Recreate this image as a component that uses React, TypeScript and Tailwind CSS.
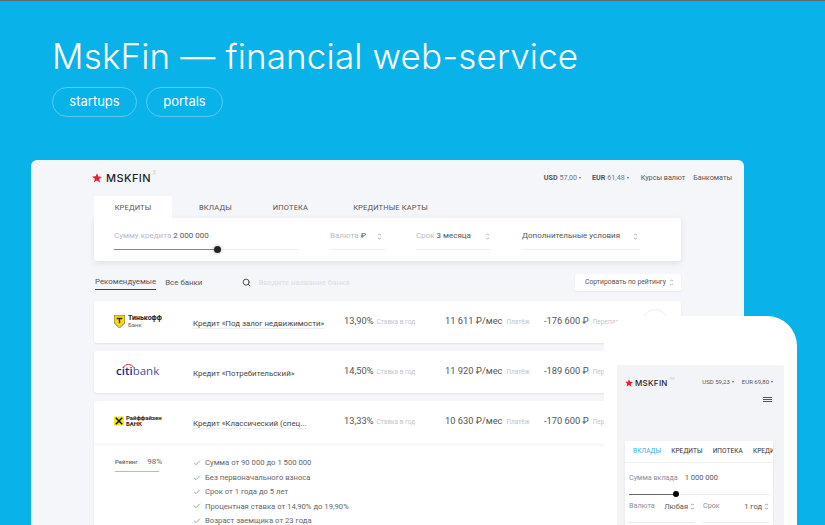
import { Check, ChevronDown, ChevronUp, Search } from "lucide-react";

const ROBOTO = "font-['Roboto',sans-serif]";

function Updown({ className = "text-[#777]" }: { className?: string }) {
  return (
    <span className={`inline-flex flex-col items-center gap-[1px] ${className}`}>
      <ChevronUp className="h-[3px] w-[5px]" strokeWidth={3} preserveAspectRatio="none" />
      <ChevronDown className="h-[3px] w-[5px]" strokeWidth={3} preserveAspectRatio="none" />
    </span>
  );
}

function Caret() {
  return <span className="ml-[2px] inline-block h-0 w-0 border-x-[1.5px] border-t-[2px] border-x-transparent border-t-[#666] align-middle" />;
}

function StarMark({ size }: { size: number }) {
  return (
    <svg width={size} height={size} viewBox="0 0 20 20">
      <path d="M10 0.500l2.700 6.600 7.100 0.500-5.400 4.600 1.700 6.900L10 14.900l-6.100 3.700 1.700-6.900L0.200 7.100l7.100-0.500z" fill="#e8222a" />
    </svg>
  );
}

function Logo({ small = false }: { small?: boolean }) {
  return (
    <div className={`flex items-center ${small ? "gap-[2px]" : "gap-[4px]"}`}>
      <StarMark size={small ? 8 : 10} />
      <span
        className={`font-['Inter',sans-serif] font-medium leading-none text-[#1f1f1f] ${
          small ? "text-[8px] tracking-[0.3px]" : "text-[11px] tracking-[0.4px]"
        }`}
      >
        MSKFIN
      </span>
    </div>
  );
}

function TinkoffLogo() {
  return (
    <div className="flex items-center gap-[3px]">
      <svg width="11" height="13" viewBox="0 0 11 13">
        <path d="M0 0h11v6.500c0 2.500-2.800 3.500-5.500 6.500C2.800 10 0 9 0 6.500z" fill="#f8d81c" stroke="#333" strokeWidth="0.6" />
        <path d="M2.700 2.800h5.600v1.500H6.200v4H4.800v-4H2.700z" fill="#333" />
      </svg>
      <div>
        <div className="text-[7px] font-bold leading-[7px] text-[#222]">Тинькофф</div>
        <div className="text-[6px] leading-[6px] text-[#666]">Банк</div>
      </div>
    </div>
  );
}

function CitiLogo() {
  return (
    <div className="relative ml-[2px] font-['Open_Sans',sans-serif] text-[11.500px] leading-none text-[#1b2a78]">
      <svg className="absolute left-[6px] top-[-2px]" width="13" height="5" viewBox="0 0 13 5">
        <path d="M1 4.500C4 0.500 9 0.500 12 4.500" fill="none" stroke="#e2312d" strokeWidth="1" />
      </svg>
      <span className="font-semibold">citi</span>
      <span className="font-normal text-[#4a4f94]">bank</span>
    </div>
  );
}

function RaiffeisenLogo() {
  return (
    <div className="flex items-center gap-[2px]">
      <svg width="10" height="10" viewBox="0 0 11 10">
        <rect width="11" height="10" fill="#f5e61e" />
        <path d="M2 1.500 9 8.500M9 1.500 2 8.500" stroke="#111" strokeWidth="1.600" />
      </svg>
      <div className="text-[6px] font-bold leading-[6px] text-[#222]">
        <div>Райффайзен</div>
        <div>БАНК</div>
      </div>
    </div>
  );
}

function LoanRow({
  logo,
  name,
  underlined,
  rate,
  payment,
  over,
}: {
  logo: React.ReactNode;
  name: string;
  underlined?: boolean;
  rate: string;
  payment: string;
  over: string;
}) {
  return (
    <div className="flex h-[42px] items-center overflow-hidden whitespace-nowrap pb-[2px]">
      <div className="flex w-[99px] shrink-0 pl-[20px]">{logo}</div>
      <div className="w-[151px] shrink-0">
        <span className={`text-[7.900px] text-[#444] ${underlined ? "border-b border-[#eeeff3]" : ""}`}>{name}</span>
      </div>
      <div className="flex w-[101px] shrink-0 items-baseline gap-[3px]">
        <span className="text-[9.300px] text-[#555]">{rate}</span>
        <span className="text-[6.500px] text-[#c3c5cc]">Ставка в год</span>
      </div>
      <div className="flex w-[99px] shrink-0 items-baseline gap-[4px]">
        <span className="text-[9.300px] text-[#555]">{payment}</span>
        <span className="text-[6.500px] text-[#c3c5cc]">Платёж</span>
      </div>
      <div className="flex shrink-0 items-baseline gap-[4px]">
        <span className="text-[9.300px] text-[#555]">{over}</span>
        <span className="text-[6.500px] text-[#c3c5cc]">Переплата</span>
      </div>
    </div>
  );
}

const conditions = [
  "Сумма от 90 000 до 1 500 000",
  "Без первоначального взноса",
  "Срок от 1 года до 5 лет",
  "Процентная ставка от 14,90% до 19,90%",
  "Возраст заемщика от 23 года",
];

export default function App() {
  return (
    <div className={`relative h-[525px] w-[825px] overflow-hidden border-t border-[#5a6a74] bg-[#0ab2ea] ${ROBOTO}`}>
      {/* Heading */}
      <div className="px-[52px] pt-[33px]">
        <h1 className="font-['Inter',sans-serif] text-[35px] font-light leading-[44px] tracking-[0.15px] text-white">
          MskFin — financial web-service
        </h1>
        <div className="mt-[9px] flex gap-[9px] font-['Inter',sans-serif] text-[13px] text-white">
          <span className="flex h-[30px] w-[85px] items-center justify-center rounded-full border border-[#5cc8f0]">startups</span>
          <span className="flex h-[30px] w-[77px] items-center justify-center rounded-full border border-[#5cc8f0]">portals</span>
        </div>
      </div>

      {/* Desktop mock */}
      <div className="ml-[31px] mt-[43px] h-[400px] w-[713px] rounded-[6px] bg-[#f5f6fa] pl-[63px] pr-[12px]">
        <div className="flex h-[36px] items-center justify-between">
          <div className="-ml-[2px] flex items-start">
            <Logo />
            <span className="ml-[2px] mt-[-4px] text-[5px] text-[#ccc]">β</span>
          </div>
          <div className="flex items-center text-[7.200px] text-[#555]">
            <span><b className="font-bold">USD</b> <span className="text-[#777]">57,00</span><Caret /></span>
            <span className="ml-[11px]"><b className="font-bold">EUR</b> <span className="text-[#777]">61,48</span><Caret /></span>
            <span className="ml-[12px]">Курсы валют</span>
            <span className="ml-[8px]">Банкоматы</span>
          </div>
        </div>

        {/* Tabs */}
        <div className="flex h-[22px] items-center text-[7.500px] tracking-[0.15px] text-[#555]">
          <span className="flex h-full w-[78px] items-center justify-center rounded-t-[2px] bg-white pt-[1px]">КРЕДИТЫ</span>
          <span className="ml-[27px] pt-[1px]">ВКЛАДЫ</span>
          <span className="ml-[41px] pt-[1px]">ИПОТЕКА</span>
          <span className="ml-[45px] pt-[1px]">КРЕДИТНЫЕ КАРТЫ</span>
        </div>

        {/* Filters */}
        <div className="flex h-[43px] w-[587px] rounded-b-[3px] rounded-tr-[3px] bg-white pt-[12px] text-[8px] shadow-[0_2px_6px_rgba(60,70,90,0.12)]">
          <div className="ml-[20px] w-[185px]">
            <div><span className="text-[#b9bcc6]">Сумму кредита</span> <span className="text-[#555]">2 000 000</span></div>
            <div className="relative mt-[7px] h-[1px] bg-[#eceef2]">
              <div className="h-[1px] w-[103px] bg-[#888]" />
              <div className="absolute left-[100px] top-[-3px] h-[7px] w-[7px] rounded-full bg-[#222] shadow-[0_0_0_2px_rgba(0,0,0,0.08)]" />
            </div>
          </div>
          <div className="ml-[31px] w-[55px]">
            <div className="flex items-center justify-between pr-[3px]"><span><span className="text-[#b9bcc6]">Валюта</span> <span className="text-[#555]">₽</span></span><Updown /></div>
            <div className="mt-[7px] h-[1px] bg-[#eceef2]" />
          </div>
          <div className="ml-[31px] w-[75px]">
            <div className="flex items-center justify-between pr-[1px]"><span><span className="text-[#b9bcc6]">Срок</span> <span className="text-[#555]">3 месяца</span></span><Updown /></div>
            <div className="mt-[7px] h-[1px] bg-[#eceef2]" />
          </div>
          <div className="ml-[31px] w-[118px]">
            <div className="flex items-center justify-between pr-[2px] text-[#555]"><span>Дополнительные условия</span><Updown /></div>
            <div className="mt-[7px] h-[1px] bg-[#eceef2]" />
          </div>
        </div>

        {/* Sort and search */}
        <div className="mt-[13px] flex h-[17px] w-[587px] items-center whitespace-nowrap text-[7.900px] text-[#555]">
          <span className="ml-[1px] border-b border-[#444] pb-[2px] pt-[2px] leading-[10px]">Рекомендуемые</span>
          <span className="ml-[9px]">Все банки</span>
          <Search className="ml-[40px] h-[9px] w-[9px] text-[#444]" strokeWidth={2.5} />
          <span className="ml-[7px] text-[#dcdee4]">Введите название банка</span>
          <span className="ml-auto flex h-[17px] w-[106px] items-center justify-between rounded-[2px] bg-white pl-[10px] pr-[7px] text-[6.800px] shadow-[0_1px_2px_rgba(60,70,90,0.06)]">
            Сортировать по рейтингу <Updown />
          </span>
        </div>

        {/* Loan rows */}
        <div className="mt-[10px] flex w-[587px] flex-col gap-[8px]">
          <div className="relative rounded-[3px] bg-white shadow-[0_1px_2px_rgba(60,70,90,0.1)]">
            <LoanRow logo={<TinkoffLogo />} name="Кредит «Под залог недвижимости»" underlined rate="13,90%" payment="11 611 ₽/мес" over="-176 600 ₽" />
            <div className="absolute right-[13px] top-[8px] h-[26px] w-[26px] rounded-full border border-[#eceef2]" />
          </div>
          <div className="rounded-[3px] bg-white shadow-[0_1px_2px_rgba(60,70,90,0.1)]">
            <LoanRow logo={<CitiLogo />} name="Кредит «Потребительский»" rate="14,50%" payment="11 920 ₽/мес" over="-189 600 ₽" />
          </div>
          <div className="rounded-[3px] bg-white shadow-[0_1px_2px_rgba(60,70,90,0.1)]">
            <LoanRow logo={<RaiffeisenLogo />} name="Кредит «Классический (спец..." underlined rate="13,33%" payment="10 630 ₽/мес" over="-170 600 ₽" />
            <div className="flex border-t-[3px] border-[#f8f9fb] pt-[10px] text-[7.700px] text-[#666]">
              <div className="ml-[21px] w-[78px] shrink-0">
                <div className="flex w-[44px] justify-between whitespace-nowrap border-b border-[#a4d46c] pb-[4px] leading-[11px]">
                  <span className="text-[6px] font-medium leading-[11px]">Рейтинг</span>
                  <span className="-mr-[3px] text-[8px]">98%</span>
                </div>
              </div>
              <ul className="flex flex-col">
                {conditions.map((c) => (
                  <li key={c} className="flex h-[14.400px] items-center gap-[4px]">
                    <Check className="h-[8px] w-[8px] text-[#777]" strokeWidth={2} />
                    {c}
                  </li>
                ))}
              </ul>
            </div>
          </div>
        </div>
      </div>

      {/* Phone mock */}
      <div className="absolute left-[604px] top-[315px] h-[300px] w-[193px] rounded-t-[30px] bg-white px-[13px] pt-[49px]">
        <div className="h-[200px] rounded-[2px] bg-[#f3f4f8] px-[8px] pt-[5px]">
          <div className="flex h-[22px] items-center justify-between pr-[3px]">
            <div className="flex items-start pt-[3px]">
              <Logo small />
              <span className="ml-[1px] mt-[-3px] text-[4px] text-[#ccc]">TM</span>
            </div>
            <div className="flex gap-[8px] text-[6px] text-[#555]">
              <span>USD 59,23<Caret /></span>
              <span>EUR 69,80<Caret /></span>
            </div>
          </div>
          <div className="flex justify-end pr-[4px] pt-[5px]">
            <div className="flex w-[9px] flex-col gap-[1px]">
              <div className="h-[1px] bg-[#555]" />
              <div className="h-[1px] bg-[#555]" />
              <div className="h-[1px] bg-[#555]" />
            </div>
          </div>
          <div className="mt-[39px] h-[120px] w-[148px] overflow-hidden bg-white shadow-[0_1px_2px_rgba(60,70,90,0.1)]">
            <div className="flex h-[22px] items-center gap-[10px] whitespace-nowrap border-b border-[#eef0f4] pl-[8px] text-[6.500px] tracking-[0.08px] text-[#333]">
              <span className="text-[#3aa6ee]">ВКЛАДЫ</span>
              <span>КРЕДИТЫ</span>
              <span>ИПОТЕКА</span>
              <span>КРЕДИТНЫЕ</span>
            </div>
            <div className="px-[4px] pt-[10px] text-[7.500px] text-[#555]">
              <div className="flex h-[10px] items-center gap-[7px]">
                <span className="text-[7.200px] text-[#8b8f9c]">Сумма вклада</span>
                <span>1 000 000</span>
              </div>
              <div className="relative mt-[11px] h-[1px] bg-[#e8eaee]">
                <div className="h-[1px] w-[47px] bg-[#666]" />
                <div className="absolute left-[44px] top-[-3px] h-[6px] w-[6px] rounded-full bg-black" />
              </div>
              <div className="mt-[6px] flex gap-[8px]">
                <div className="w-[66px]">
                  <div className="flex items-center justify-between"><span className="text-[7.200px] text-[#8b8f9c]">Валюта</span><span className="flex items-center gap-[2px]">Любая <Updown className="text-[#555]" /></span></div>
                  <div className="mt-[10px] h-[1px] bg-[#e8eaee]" />
                </div>
                <div className="w-[66px]">
                  <div className="flex items-center justify-between"><span className="text-[7.200px] text-[#8b8f9c]">Срок</span><span className="flex items-center gap-[2px]">1 год <Updown className="text-[#555]" /></span></div>
                  <div className="mt-[10px] h-[1px] bg-[#e8eaee]" />
                </div>
              </div>
            </div>
          </div>
        </div>
      </div>
    </div>
  );
}
